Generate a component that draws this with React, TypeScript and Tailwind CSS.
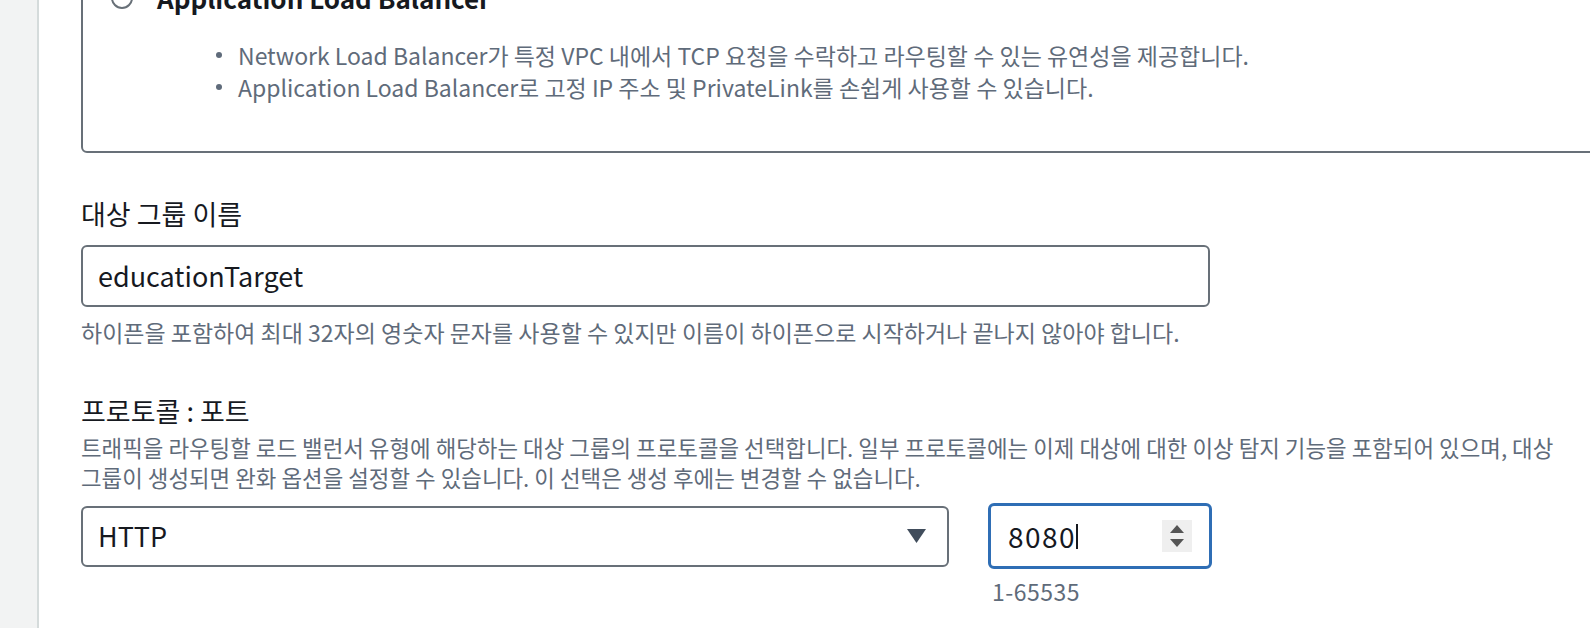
import React from 'react';

const bullets = [
  'Network Load Balancer가 특정 VPC 내에서 TCP 요청을 수락하고 라우팅할 수 있는 유연성을 제공합니다.',
  'Application Load Balancer로 고정 IP 주소 및 PrivateLink를 손쉽게 사용할 수 있습니다.',
];

export default function App() {
  return (
    <div className="flex h-[628px] w-[1590px] overflow-hidden bg-white font-['Noto_Sans_CJK_KR',sans-serif] text-[#16191f]">
      {/* Side nav strip */}
      <aside className="w-[39px] shrink-0 border-r-2 border-[#d5dbdb] bg-[#f2f3f3]" />

      <main className="flex-1 pl-[42px]">
        {/* Load balancer type card (top cut off) */}
        <div className="mr-[-60px] mt-[-57px] rounded-[6px] border-2 border-[#687078] pb-[48px] pl-[28px] pt-[35px]">
          <div className="flex h-[36px] items-center gap-[24px]">
            <span className="h-[22px] w-[22px] rounded-full border-2 border-[#687078] bg-white" />
            <span className="text-[26px] font-bold leading-[36px]">Application Load Balancer</span>
          </div>
          <ul className="mt-[23px] pl-[105px] text-[23px] leading-[32px] text-[#5f6b7a]">
            {bullets.map((b) => (
              <li key={b} className="flex items-center gap-[16px] whitespace-nowrap">
                <span className="h-[6px] w-[6px] shrink-0 rounded-full bg-[#5f6b7a]" />
                {b}
              </li>
            ))}
          </ul>
        </div>

        {/* Target group name */}
        <div className="mt-[44px] text-[27px] leading-[34px]">대상 그룹 이름</div>
        <div className="mt-[14px] flex h-[62px] w-[1129px] items-center rounded-[6px] border-2 border-[#687078] px-[15px] text-[27px]">
          educationTarget
        </div>
        <div className="mt-[10px] whitespace-nowrap text-[23px] leading-[30px] text-[#5f6b7a]">
          하이픈을 포함하여 최대 32자의 영숫자 문자를 사용할 수 있지만 이름이 하이픈으로 시작하거나 끝나지 않아야 합니다.
        </div>

        {/* Protocol : port */}
        <div className="mt-[47px] text-[27px] leading-[34px]">프로토콜 : 포트</div>
        <div className="mt-[4px] whitespace-nowrap text-[22.4px] leading-[30px] text-[#5f6b7a]">
          트래픽을 라우팅할 로드 밸런서 유형에 해당하는 대상 그룹의 프로토콜을 선택합니다. 일부 프로토콜에는 이제 대상에 대한 이상 탐지 기능을 포함되어 있으며, 대상
          <br />
          그룹이 생성되면 완화 옵션을 설정할 수 있습니다. 이 선택은 생성 후에는 변경할 수 없습니다.
        </div>

        <div className="mt-[11px] flex items-center gap-[39px]">
          <div className="flex h-[61px] w-[868px] items-center justify-between rounded-[6px] border-2 border-[#687078] pl-[15px] pr-[21px] text-[27px]">
            <span>HTTP</span>
            <svg width="19" height="14" viewBox="0 0 19 14">
              <polygon points="0,0 19,0 9.5,14" fill="#414d5c" />
            </svg>
          </div>

          <div className="flex h-[66px] w-[224px] items-center justify-between rounded-[6px] border-[3px] border-[#2f6eb5] pl-[17px] pr-[17px] text-[28px]">
            <span className="flex items-center tracking-[1.5px]">
              8080
              <span className="h-[25px] w-[2px] bg-[#16191f]" />
            </span>
            <span className="flex h-[32px] w-[30px] flex-col items-center justify-center gap-[6px] bg-[#efefef]">
              <svg width="14" height="8" viewBox="0 0 14 8">
                <polygon points="7,0 14,8 0,8" fill="#555" />
              </svg>
              <svg width="14" height="8" viewBox="0 0 14 8">
                <polygon points="0,0 14,0 7,8" fill="#555" />
              </svg>
            </span>
          </div>
        </div>
        <div className="ml-[911px] mt-[7px] text-[23px] leading-[30px] tracking-[0.5px] text-[#5f6b7a]">1-65535</div>
      </main>
    </div>
  );
}
